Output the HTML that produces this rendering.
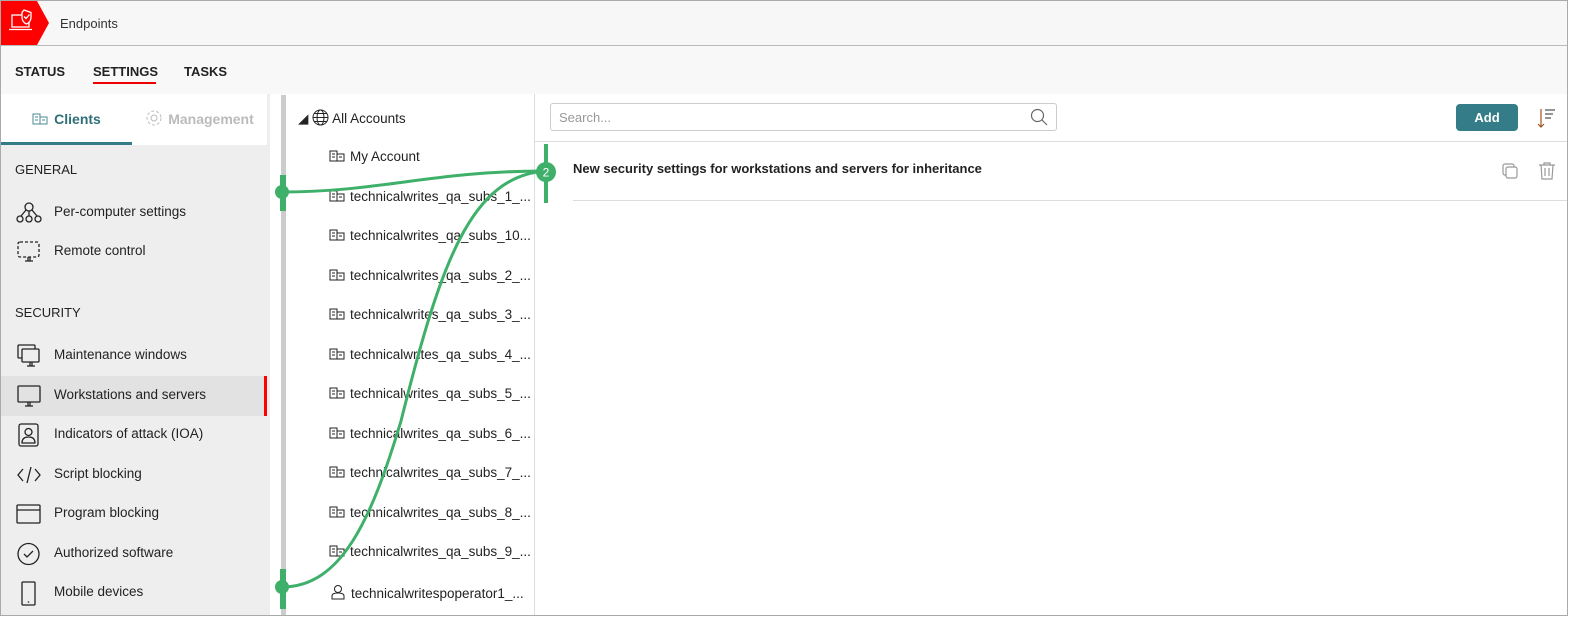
<!DOCTYPE html>
<html><head><meta charset="utf-8"><style>
*{box-sizing:border-box;margin:0;padding:0}
body{width:1589px;height:624px;overflow:hidden;background:#fff;font-family:"Liberation Sans",sans-serif;color:#222;position:relative}
.frame{position:absolute;left:0;top:0;width:1568px;height:616px;border:1px solid #aaa;overflow:hidden;background:#fff}
.hdr{position:absolute;left:0;top:0;right:0;height:45px;background:#f7f7f7;border-bottom:1px solid #bbb}
.logo{position:absolute;left:0;top:0;width:48px;height:44px}
.hdr .t{position:absolute;left:59px;top:15px;font-size:13px;color:#333}
.tabs{position:absolute;left:0;top:45px;right:0;height:48px;background:#f8f8f8}
.tabs span{position:absolute;top:18px;font-size:13px;font-weight:bold;color:#222}
.left{position:absolute;left:0;top:93px;width:269px;bottom:0;background:#eee}
.subt{position:absolute;top:0;height:51px;width:131px;background:#fff;font-weight:bold;font-size:14px;line-height:51px;text-align:center}
.sec{position:absolute;left:14px;font-size:13px;color:#222}
.item{position:absolute;left:0;width:266px;height:40px;font-size:13.5px;color:#222}
.item span{position:absolute;left:53px;top:11px}
.item svg{position:absolute;left:15px;top:8px}
.sb{position:absolute;left:280px;top:94px;width:5px;height:522px;background:#ccc}
.tree{position:absolute;left:286px;top:93px;width:248px;bottom:0;border-right:1px solid #ddd}
.tr{position:absolute;font-size:13.5px;color:#222;white-space:nowrap}
.right{position:absolute;left:534px;top:93px;right:0;bottom:0}
.search{position:absolute;left:15px;top:9px;width:507px;height:28px;border:1px solid #ccc;border-radius:3px;font-size:13px;color:#999;padding:6px 8px}
.add{position:absolute;left:921px;top:10px;width:62px;height:27px;background:#347c87;border-radius:4px;color:#fff;font-weight:bold;font-size:13px;text-align:center;line-height:27px}
</style></head><body><div class="frame">
<div class="hdr">
<svg class="logo" viewBox="0 0 48 44"><polygon points="0,0 36,0 48,22 36,44 0,44" fill="#f00"/><rect x="11" y="14" width="17" height="12" fill="none" stroke="#fff" stroke-width="1.3"/><line x1="8" y1="28.5" x2="31" y2="28.5" stroke="#fff" stroke-width="1.3"/><path d="M23 9 L30 11.5 V16 Q30 21 25.5 23 Q21 21 21 16 V11.5Z" fill="#f00" stroke="#fff" stroke-width="1.3"/><path d="M23 15.5 l2 2 l3.5-4" fill="none" stroke="#fff" stroke-width="1.3"/></svg>
<div class="t">Endpoints</div></div>
<div class="tabs"><span style="left:14px">STATUS</span><span style="left:92px">SETTINGS</span><span style="left:183px">TASKS</span><div style="position:absolute;left:92px;top:36px;width:63px;height:2px;background:#e00"></div></div>
<div class="left">
<div class="subt" style="left:0;color:#2f6f78"><svg width="16" height="12" viewBox="0 0 16 12" style="vertical-align:-1px;margin-right:6px"><rect x="1" y="1" width="7" height="10" fill="none" stroke="#4a8a94"/><rect x="8" y="4" width="7" height="7" fill="none" stroke="#4a8a94"/><path d="M3 4h3M3 7h3M10 7h3" stroke="#4a8a94"/></svg>Clients</div>
<div style="position:absolute;left:0;top:48px;width:132px;height:3px;background:#347c87"></div>
<div class="subt" style="left:131px;width:135px;color:#bbb"><svg width="18" height="18" viewBox="0 0 18 18" style="vertical-align:-3px;margin-right:5px"><circle cx="9" cy="9" r="3" fill="none" stroke="#bbb"/><circle cx="9" cy="9" r="7" fill="none" stroke="#bbb" stroke-dasharray="3 2"/></svg>Management</div>
<div class="sec" style="top:68px">GENERAL</div>
<div class="item" style="top:99px"><svg width="26" height="24" viewBox="0 0 26 24"><circle cx="13" cy="6" r="4" fill="none" stroke="#222" stroke-width="1.3"/><circle cx="4" cy="18" r="3" fill="none" stroke="#222" stroke-width="1.3"/><circle cx="13" cy="18" r="3" fill="none" stroke="#222" stroke-width="1.3"/><circle cx="22" cy="18" r="3" fill="none" stroke="#222" stroke-width="1.3"/><path d="M10 9 L5 15 M13 10v5 M16 9 L21 15" stroke="#222" stroke-width="1.3"/></svg><span>Per-computer settings</span></div>
<div class="item" style="top:138px"><svg width="26" height="24" viewBox="0 0 26 24"><rect x="2" y="2" width="21" height="15" rx="2" fill="none" stroke="#222" stroke-width="1.3" stroke-dasharray="3 2"/><path d="M9 21h8M12 17v4M14 17v4" stroke="#222" stroke-width="1.3"/></svg><span>Remote control</span></div>
<div class="sec" style="top:211px">SECURITY</div>
<div class="item" style="top:242px"><svg width="26" height="24" viewBox="0 0 26 24"><rect x="2" y="1" width="17" height="13" rx="1" fill="none" stroke="#222" stroke-width="1.3"/><rect x="6" y="5" width="17" height="13" rx="1" fill="#eee" stroke="#222" stroke-width="1.3"/><path d="M11 22h8M14 18v4M16 18v4" stroke="#222" stroke-width="1.3"/></svg><span>Maintenance windows</span></div>
<div class="item" style="top:282px;background:#e2e2e2"><svg width="26" height="24" viewBox="0 0 26 24"><rect x="2" y="2" width="22" height="16" rx="1" fill="none" stroke="#222" stroke-width="1.3"/><path d="M9 22h8M12 18v4M14 18v4" stroke="#222" stroke-width="1.3"/></svg><span>Workstations and servers</span><div style="position:absolute;right:0;top:0;width:3px;height:40px;background:#f00"></div></div>
<div class="item" style="top:321px"><svg width="26" height="24" viewBox="0 0 26 24"><rect x="3" y="1" width="19" height="22" rx="2" fill="none" stroke="#222" stroke-width="1.3"/><circle cx="12.5" cy="9" r="3.5" fill="none" stroke="#222" stroke-width="1.3"/><path d="M6 20 Q6 14 12.5 14 Q19 14 19 20Z" fill="none" stroke="#222" stroke-width="1.3"/></svg><span>Indicators of attack (IOA)</span></div>
<div class="item" style="top:361px"><svg width="26" height="24" viewBox="0 0 26 24"><path d="M7 6 L2 12 L7 18 M19 6 L24 12 L19 18 M15 4 L11 20" fill="none" stroke="#222" stroke-width="1.3"/></svg><span>Script blocking</span></div>
<div class="item" style="top:400px"><svg width="26" height="24" viewBox="0 0 26 24"><rect x="1" y="3" width="23" height="18" rx="1" fill="none" stroke="#222" stroke-width="1.3"/><path d="M1 8h23" stroke="#222" stroke-width="1.3"/></svg><span>Program blocking</span></div>
<div class="item" style="top:440px"><svg width="26" height="24" viewBox="0 0 26 24"><circle cx="12.5" cy="12" r="10.5" fill="none" stroke="#222" stroke-width="1.3"/><path d="M8 12 l3 3 l6-6" fill="none" stroke="#222" stroke-width="1.3"/></svg><span>Authorized software</span></div>
<div class="item" style="top:479px"><svg width="26" height="26" viewBox="0 0 26 26"><rect x="6" y="1" width="13" height="23" rx="1" fill="none" stroke="#222" stroke-width="1.3"/><circle cx="12.5" cy="21" r=".8" fill="#222"/></svg><span>Mobile devices</span></div>
</div>
<div class="sb"></div>
<div class="tree">
<div class="tr" style="left:11px;top:15px">◢&nbsp;<svg width="17" height="17" viewBox="0 0 17 17" style="vertical-align:-3px"><circle cx="8.5" cy="8.5" r="7.5" fill="none" stroke="#222"/><ellipse cx="8.5" cy="8.5" rx="3.5" ry="7.5" fill="none" stroke="#222"/><path d="M1 8.5h15M2.5 4.5h12M2.5 12.5h12" stroke="#222"/></svg> All Accounts</div>
<div id="rows"></div>
</div>
<div class="right">
<div class="search">Search...<svg width="18" height="18" viewBox="0 0 18 18" style="position:absolute;right:8px;top:4px"><circle cx="7.5" cy="7.5" r="6" fill="none" stroke="#666" stroke-width="1.2"/><path d="M12 12l5 5" stroke="#666" stroke-width="1.2"/></svg></div>
<div class="add">Add</div>
<svg width="20" height="24" viewBox="0 0 20 24" style="position:absolute;left:1003px;top:13px"><path d="M3 2v18M0 17l3 3 3-3" fill="none" stroke="#a0521d" stroke-width="1.2"/><path d="M7 3h10M7 7h8M7 11h6" stroke="#555" stroke-width="1.2"/></svg>
<div style="position:absolute;left:0;right:0;top:47px;height:1px;background:#ddd"></div>
<div style="position:absolute;left:38px;top:67px;font-size:13px;font-weight:bold;color:#222">New security settings for workstations and servers for inheritance</div>
<div style="position:absolute;left:38px;right:0;top:106px;height:1px;background:#ddd"></div>
<svg width="20" height="20" viewBox="0 0 20 20" style="position:absolute;left:966px;top:68px"><rect x="2" y="2" width="11" height="11" rx="2" fill="none" stroke="#999" stroke-width="1.2"/><rect x="5" y="5" width="11" height="11" rx="2" fill="#fff" stroke="#999" stroke-width="1.2"/></svg>
<svg width="20" height="20" viewBox="0 0 20 20" style="position:absolute;left:1002px;top:67px"><path d="M2 4h16M7 4V2h6v2M4 4l1 14h10l1-14M8 7v8M12 7v8" fill="none" stroke="#999" stroke-width="1.2"/></svg>
</div>
<svg width="1568" height="616" style="position:absolute;left:0;top:0" viewBox="0 0 1568 616">
<g stroke="#3fb06a" fill="none" stroke-width="3">
<path d="M281 191 C380 191 430 170 545 170"/>
<path d="M281 586 C340 586 370 520 400 420 C440 260 470 175 545 170"/>
</g>
<rect x="279" y="174" width="6" height="36" fill="#3fb06a"/>
<rect x="279" y="568" width="6" height="40" fill="#3fb06a"/>
<rect x="543" y="143" width="4" height="59" fill="#3fb06a"/>
<circle cx="281" cy="191" r="7" fill="#3fb06a"/>
<circle cx="281" cy="586" r="7" fill="#3fb06a"/>
<circle cx="545" cy="171" r="10" fill="#3fb06a"/>
<text x="545" y="175.5" font-size="12" fill="#fff" text-anchor="middle" font-family="Liberation Sans">2</text>
</svg>
</div>
<script>
var n=['My Account','technicalwrites_qa_subs_1_...','technicalwrites_qa_subs_10...','technicalwrites_qa_subs_2_...','technicalwrites_qa_subs_3_...','technicalwrites_qa_subs_4_...','technicalwrites_qa_subs_5_...','technicalwrites_qa_subs_6_...','technicalwrites_qa_subs_7_...','technicalwrites_qa_subs_8_...','technicalwrites_qa_subs_9_...'];
var h='';var ic='<svg width="16" height="12" viewBox="0 0 16 12" style="vertical-align:-1px;margin-right:5px"><rect x="1" y="1" width="7" height="10" fill="none" stroke="#222"/><rect x="8" y="4" width="7" height="7" fill="none" stroke="#222"/><path d="M3 4h3M3 7h3M10 7h3" stroke="#222"/></svg>';
n.forEach(function(t,i){h+='<div class="tr" style="left:42px;top:'+(55+i*39.5)+'px">'+ic+t+'</div>';});
h+='<div class="tr" style="left:44px;top:490px"><svg width="14" height="16" viewBox="0 0 14 16" style="vertical-align:-2px;margin-right:6px"><circle cx="7" cy="5" r="3.5" fill="none" stroke="#222"/><path d="M1 15v-3q0-3 6-3t6 3v3z" fill="none" stroke="#222"/></svg>technicalwritespoperator1_...</div>';
document.getElementById('rows').innerHTML=h;
</script>
</body></html>
